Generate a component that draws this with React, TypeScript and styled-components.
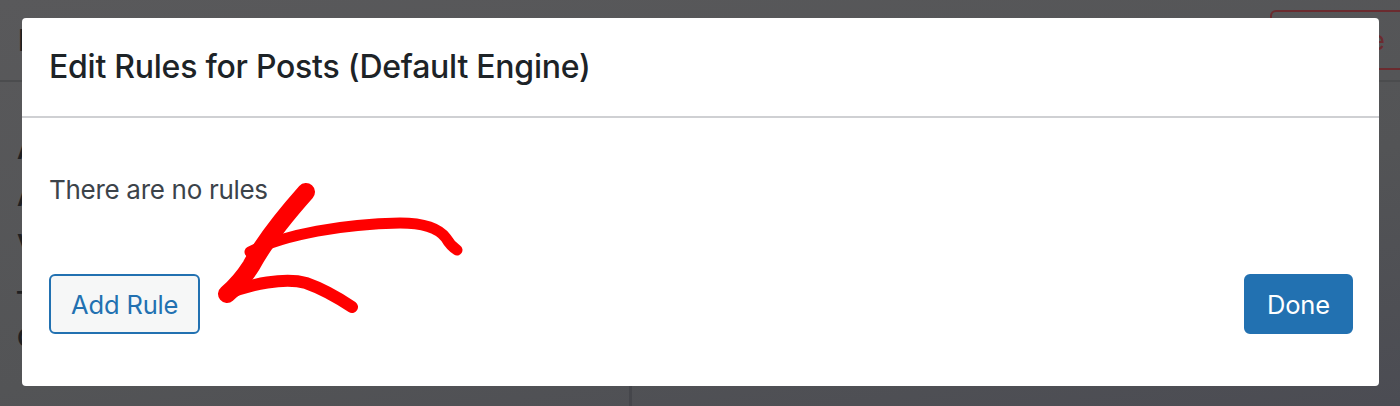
import React from 'react';
import styled, { createGlobalStyle } from 'styled-components';

const GlobalStyle = createGlobalStyle`
  html, body {
    margin: 0;
    padding: 0;
    background: #545557;
    overflow: hidden;
  }
  body {
    font-family: Inter, "Noto Sans", "Liberation Sans", sans-serif;
  }
`;

const Screen = styled.div`
  position: relative;
  width: 1400px;
  height: 406px;
  overflow: hidden;
  background: linear-gradient(170deg, #59595b 0%, #535456 60%, #4b4c53 100%);
`;

// the admin page behind the dimmed overlay
const AdminPage = styled.div`
  display: flex;
  flex-direction: column;
  height: 100%;
  color: #1f2022;
`;

const PageHeader = styled.div`
  display: flex;
  align-items: center;
  justify-content: space-between;
  height: 80px;
  padding-left: 18px;
  border-bottom: 2px solid #4b4c4e;
`;

const PageTitle = styled.div`
  font-size: 30px;
  font-weight: 600;
`;

const DangerButton = styled.div`
  display: flex;
  align-items: center;
  justify-content: flex-end;
  box-sizing: border-box;
  width: 145px;
  height: 60px;
  margin-right: -15px;
  padding-right: 28px;
  border: 2px solid #6b2b2f;
  border-radius: 6px;
  color: #6b2b2f;
  font-size: 26px;
`;

const PageBody = styled.div`
  display: grid;
  grid-template-columns: 632px 1fr;
  flex: 1;
`;

const LeftColumn = styled.div`
  display: flex;
  flex-direction: column;
  gap: 16px;
  padding: 52px 0 0 17px;
  border-right: 3px solid #45464b;
  font-size: 26px;
  font-weight: 600;
`;

const RightColumn = styled.div``;

const Overlay = styled.div`
  position: absolute;
  inset: 0;
  display: flex;
  padding: 18px 21px 20px 22px;
`;

const Modal = styled.div`
  flex: 1;
  display: flex;
  flex-direction: column;
  background: #ffffff;
  border-radius: 4px;
  overflow: hidden;
`;

const ModalHeader = styled.div`
  display: flex;
  align-items: center;
  box-sizing: border-box;
  height: 100px;
  padding: 0 27px 2px;
  border-bottom: 2px solid #cfd0d3;
`;

const ModalTitle = styled.h1`
  margin: 0;
  font-size: 32px;
  font-weight: 500;
  letter-spacing: -0.25px;
  color: #1d2327;
`;

const ModalBody = styled.div`
  flex: 1;
  display: flex;
  flex-direction: column;
  padding: 54px 26px 52px 27px;
`;

const EmptyText = styled.p`
  margin: 0;
  font-size: 26px;
  line-height: 36px;
  color: #3c434a;
  letter-spacing: -0.3px;
`;

const Footer = styled.div`
  display: flex;
  justify-content: space-between;
  align-items: center;
  margin-top: auto;
`;

const Button = styled.button<{ $primary?: boolean }>`
  box-sizing: border-box;
  height: 60px;
  padding: 0 ${(p) => (p.$primary ? 21 : 20)}px;
  border: 2px solid #2271b1;
  border-radius: 6px;
  font-family: inherit;
  font-size: 25.5px;
  letter-spacing: -0.15px;
  cursor: pointer;
  background: ${(p) => (p.$primary ? '#2271b1' : '#f6f7f7')};
  color: ${(p) => (p.$primary ? '#ffffff' : '#2271b1')};
`;

const Annotation = styled.svg`
  position: absolute;
  left: 0;
  top: 0;
  pointer-events: none;
`;

function App() {
  return (
    <Screen>
      <GlobalStyle />
      <AdminPage>
        <PageHeader>
          <PageTitle>I</PageTitle>
          <DangerButton>Remove</DangerButton>
        </PageHeader>
        <PageBody>
          <LeftColumn>
            <div>A</div>
            <div>A</div>
            <div>V</div>
            <div>—</div>
            <div>C</div>
          </LeftColumn>
          <RightColumn />
        </PageBody>
      </AdminPage>

      <Overlay>
        <Modal>
          <ModalHeader>
            <ModalTitle>Edit Rules for Posts (Default Engine)</ModalTitle>
          </ModalHeader>
          <ModalBody>
            <EmptyText>There are no rules</EmptyText>
            <Footer>
              <Button>Add Rule</Button>
              <Button $primary>Done</Button>
            </Footer>
          </ModalBody>
        </Modal>
      </Overlay>

      <Annotation width="1400" height="406" viewBox="0 0 1400 406">
        <g fill="none" stroke="#ff0000" strokeLinecap="round" strokeLinejoin="round">
          <path d="M306 192 C290 210 266 238 251 266 C242 280 234 288 227 294" strokeWidth="18" />
          <path d="M250 252 C285 234 344 224 400 223 C426 223 440 230 446 238 C450 245 454 248 457 250" strokeWidth="11" />
          <path d="M227 294 C250 284 285 277 306 283 C326 290 340 299 352 307" strokeWidth="12" />
        </g>
      </Annotation>
    </Screen>
  );
}

export default App;
